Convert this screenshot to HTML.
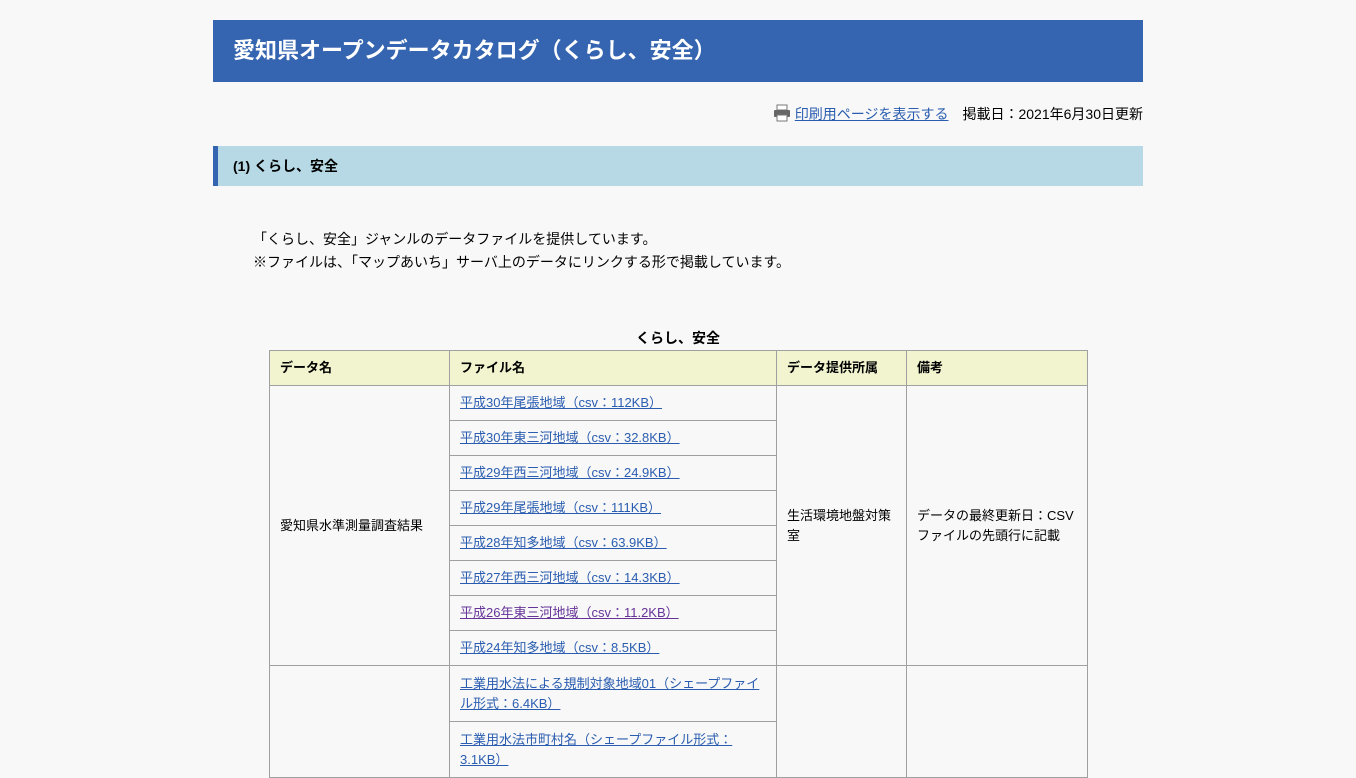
<!DOCTYPE html><html><head><meta charset="utf-8"><style>
body{margin:0;background:#f8f8f8;font-family:"Liberation Sans","Noto Sans CJK JP",sans-serif;font-size:13px;color:#000}
.w{position:absolute;left:213px;width:930px}
h1{position:absolute;left:213px;top:20px;width:930px;height:62px;margin:0;background:#3565b0;color:#fff;font-size:22px;line-height:62px;box-sizing:border-box;padding-left:20px;font-weight:bold}
.meta{position:absolute;top:104px;right:213px;font-size:14px;line-height:20px}
a{color:#2a5db0;text-decoration:underline}
.h2{position:absolute;left:213px;top:146px;width:930px;height:40px;background:#b6d9e5;border-left:5px solid #3565b0;box-sizing:border-box;padding-left:15px;line-height:40px;font-weight:bold;font-size:14px}
.p{position:absolute;left:253px;top:228px;font-size:14px;line-height:23px}
.cap{position:absolute;left:269px;width:818px;top:328px;text-align:center;font-weight:bold;font-size:14px}
table{position:absolute;left:269px;top:350px;border-collapse:collapse;table-layout:fixed;width:818px}
td,th{border:1px solid #a0a0a0;padding:0 10px;text-align:left;vertical-align:middle;line-height:20px}
th{background:#f2f4d0;height:34px;font-weight:bold}
td.f{height:34px}
</style></head><body>
<h1>愛知県オープンデータカタログ（くらし、安全）</h1>
<div class="meta"><svg width="18" height="18" viewBox="0 0 18 18" style="vertical-align:-3px;margin-right:4px"><rect x="4" y="1" width="10" height="5" fill="#fff" stroke="#777"/><rect x="1" y="6" width="16" height="7" rx="1" fill="#666"/><rect x="4" y="11" width="10" height="6" fill="#fff" stroke="#777"/></svg><a href="#">印刷用ページを表示する</a>　掲載日：2021年6月30日更新</div>
<div class="h2">(1) くらし、安全</div>
<div class="p">「くらし、安全」ジャンルのデータファイルを提供しています。<br>※ファイルは、「マップあいち」サーバ上のデータにリンクする形で掲載しています。</div>
<div class="cap">くらし、安全</div>
<table><colgroup><col style="width:180px"><col style="width:327px"><col style="width:130px"><col style="width:181px"></colgroup>
<tr><th>データ名</th><th>ファイル名</th><th>データ提供所属</th><th>備考</th></tr>
<tr><td rowspan="8">愛知県水準測量調査結果</td><td class="f"><a href="#">平成30年尾張地域（csv：112KB）</a></td><td rowspan="8">生活環境地盤対策室</td><td rowspan="8">データの最終更新日：CSVファイルの先頭行に記載</td></tr>
<tr><td class="f"><a href="#">平成30年東三河地域（csv：32.8KB）</a></td></tr>
<tr><td class="f"><a href="#">平成29年西三河地域（csv：24.9KB）</a></td></tr>
<tr><td class="f"><a href="#">平成29年尾張地域（csv：111KB）</a></td></tr>
<tr><td class="f"><a href="#">平成28年知多地域（csv：63.9KB）</a></td></tr>
<tr><td class="f"><a href="#">平成27年西三河地域（csv：14.3KB）</a></td></tr>
<tr><td class="f"><a href="#" style="color:#663399">平成26年東三河地域（csv：11.2KB）</a></td></tr>
<tr><td class="f"><a href="#">平成24年知多地域（csv：8.5KB）</a></td></tr>
<tr><td rowspan="2"></td><td style="height:55px"><a href="#">工業用水法による規制対象地域01（シェープファイル形式：6.4KB）</a></td><td rowspan="2"></td><td rowspan="2"></td></tr>
<tr><td style="height:55px"><a href="#">工業用水法市町村名（シェープファイル形式：3.1KB）</a></td></tr>
</table>
</body></html>
